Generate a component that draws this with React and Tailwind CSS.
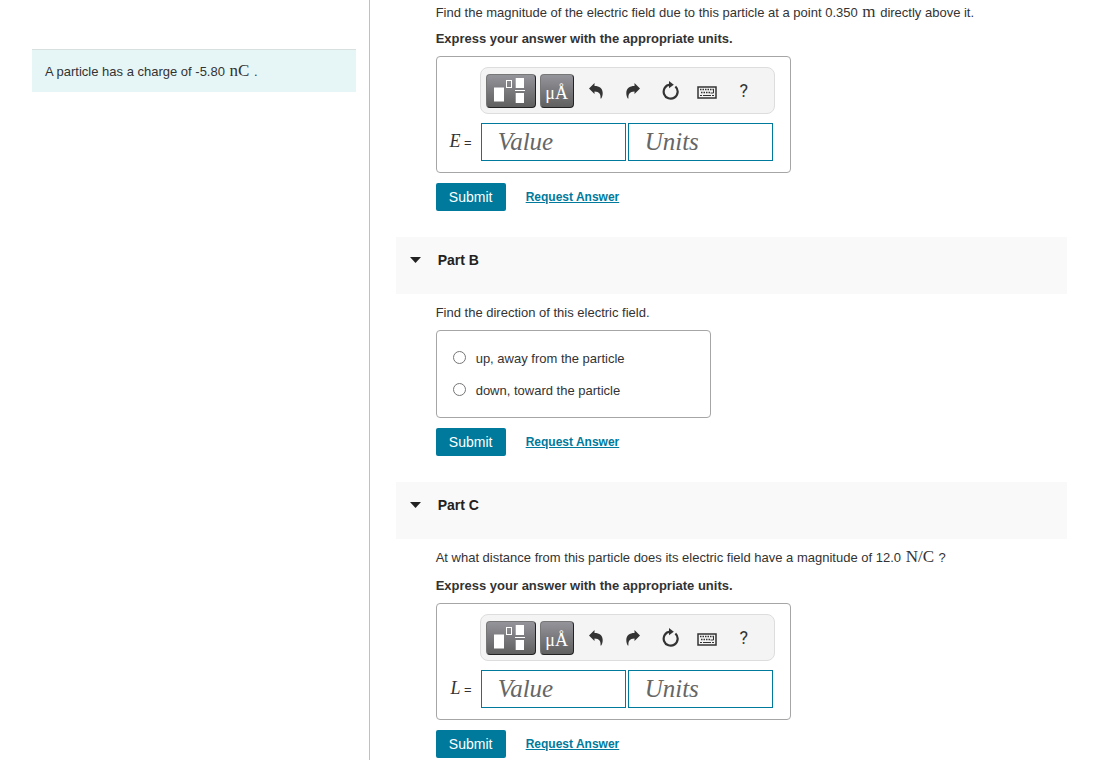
import React from "react";

function Unit({ children }) {
  return <span className="px-px font-['Liberation_Serif',serif] text-[17px] leading-none">{children}</span>;
}

function TemplatesIcon() {
  return (
    <svg width="34" height="26" viewBox="0 0 34 26" fill="none" aria-hidden="true">
      <rect x="0" y="9.500" width="10" height="14" fill="#fff" />
      <rect x="12.500" y="2.500" width="5" height="7" stroke="#fff" />
      <rect x="21.700" y="0" width="8.300" height="10" fill="#fff" />
      <rect x="21" y="12" width="10" height="1" fill="#fff" />
      <rect x="21.700" y="15" width="8.300" height="10" fill="#fff" />
    </svg>
  );
}

function AngstromIcon() {
  return <span className="pt-[5px] text-lg leading-none">μÅ</span>;
}

function UndoIcon({ flip }) {
  return (
    <svg width="14" height="16" viewBox="0 0 14 16" className={flip ? "-scale-x-100" : ""} aria-hidden="true">
      <path
        fill="#333"
        d="M0 5.500 5.500 0V3C10.500 3 13.700 5.500 13.700 10 13.700 12.500 13 14.500 12.200 15.500H11.500C12 11.500 10.500 8.700 5.500 8.500V11Z"
      />
    </svg>
  );
}

function ResetIcon() {
  return (
    <svg width="18" height="19" viewBox="0 0 18 19" aria-hidden="true">
      <path d="M14.400 5.500A7 7 0 1 1 9 3.700" fill="none" stroke="#333" strokeWidth="2.200" />
      <path d="M8 0 12.800 3.700 8 7.200Z" fill="#333" />
    </svg>
  );
}

function KeyboardIcon() {
  return (
    <svg width="20" height="17" viewBox="0 0 20 17" fill="none" stroke="#333" aria-hidden="true">
      <rect x="1" y="5" width="18" height="11" strokeWidth="1.500" />
      <path d="M3 7.500H17M4 10.500H14" strokeWidth="1.500" strokeDasharray="1.500 1" />
      <path d="M16.500 7V11H13.500M6 13.500H14M3 13.500H5M15 13.500H17" />
    </svg>
  );
}

const iconButton = "flex h-9 w-8 items-center justify-center";
const darkButton =
  "flex h-[34px] items-center justify-center rounded border border-t-[#777] border-l-[#777] border-r-[#222] border-b-[#222] bg-linear-to-b from-[#94949b] to-[#606060]";

function Field({ name, placeholder }) {
  return (
    <input
      aria-label={name + " " + placeholder}
      placeholder={placeholder}
      className="h-[38px] w-[145px] border border-[#007a9c] bg-white px-4 font-['Liberation_Serif',serif] text-[25px] italic placeholder:text-[#666]"
    />
  );
}

function AnswerBox({ symbol }) {
  return (
    <div className="flex h-[117px] w-[355px] flex-col items-end rounded border border-[#a6a6a6] pt-[10px] pr-[15px]">
      <div className="flex h-[47px] w-[295px] shrink-0 items-center rounded-lg border border-[#ddd] bg-[#f4f4f4] pl-[5px]">
        <button aria-label="Templates" className={darkButton + " w-[50px]"}><TemplatesIcon /></button>
        <button aria-label="Symbols" className={darkButton + " ml-1 w-[34px] font-['Liberation_Serif',serif] text-white"}><AngstromIcon /></button>
        <div className="ml-[6px] flex items-center gap-[5px]">
          <button aria-label="Undo" className={iconButton}><UndoIcon /></button>
          <button aria-label="Redo" className={iconButton}><UndoIcon flip /></button>
          <button aria-label="Reset" className={iconButton}><ResetIcon /></button>
          <button aria-label="Keyboard" className={iconButton}><KeyboardIcon /></button>
          <button aria-label="Help" className={iconButton + " font-[Roboto,sans-serif] text-lg"}>?</button>
        </div>
      </div>
      <div className="mt-[9px] flex items-center">
        <span className="mr-[9px] text-[13px]">
          <i className="font-['Liberation_Serif',serif] text-lg leading-none">{symbol}</i> =
        </span>
        <div className="mr-[2px] flex gap-[2px]">
          <Field name={symbol} placeholder="Value" />
          <Field name={symbol} placeholder="Units" />
        </div>
      </div>
    </div>
  );
}

function Actions() {
  return (
    <div className="mt-[10px] flex h-7 items-center gap-5">
      <button className="h-7 w-[70px] rounded-xs bg-[#007a9c] text-sm text-white">Submit</button>
      <a href="#answer" className="text-xs font-bold text-[#007a9c] underline">Request Answer</a>
    </div>
  );
}

function PartHeader({ children }) {
  return (
    <h2 className="mt-[26px] flex h-[57px] items-start bg-[#f9f9f9] pt-[13px] pl-[14px] text-sm font-bold text-[#222]">
      <button className="flex items-center gap-[17px]">
        <svg width="11" height="6" viewBox="0 0 11 6" aria-hidden="true"><path d="M0 0H11L5.500 6Z" fill="#222" /></svg>
        {children}
      </button>
    </h2>
  );
}

function Choice({ children }) {
  return (
    <label className="flex items-start gap-[10px]">
      <input type="radio" name="direction" className="mt-[2px] size-[13px]" />
      {children}
    </label>
  );
}

export default function App() {
  return (
    <div className="flex h-screen overflow-hidden bg-white font-['Liberation_Sans',Arial,sans-serif] text-[13px] leading-5 text-[#333]">
      <aside className="w-[calc(33.333%-1px)] shrink-0 border-r border-[#bbc1c5] pt-[49px] pr-[13px] pl-8">
        <p className="border-t border-[#d8dfdf] bg-[#e6f6f6] px-[13px] pt-3 pb-[10px]">
          A particle has a charge of -5.80 <Unit>nC</Unit> .
        </p>
      </aside>
      <main className="min-w-0 flex-1 pr-[45px] pl-[26px]">
        <section className="pt-[3px] pl-10">
          <p>Find the magnitude of the electric field due to this particle at a point 0.350 <Unit>m</Unit> directly above it.</p>
          <p className="mt-[6px] mb-[7px] font-bold">Express your answer with the appropriate units.</p>
          <AnswerBox symbol="E" />
          <Actions />
        </section>
        <PartHeader>Part B</PartHeader>
        <section className="pt-[9px] pl-10">
          <p>Find the direction of this electric field.</p>
          <fieldset className="mt-[7px] flex h-[88px] w-[275px] flex-col gap-3 rounded border border-[#a6a6a6] pt-[18px] pl-4">
            <Choice>up, away from the particle</Choice>
            <Choice>down, toward the particle</Choice>
          </fieldset>
          <Actions />
        </section>
        <PartHeader>Part C</PartHeader>
        <section className="pt-[9px] pl-10">
          <p>At what distance from this particle does its electric field have a magnitude of 12.0 <Unit>N/C</Unit> ?</p>
          <p className="mt-2 mb-[7px] font-bold">Express your answer with the appropriate units.</p>
          <AnswerBox symbol="L" />
          <Actions />
        </section>
      </main>
    </div>
  );
}
